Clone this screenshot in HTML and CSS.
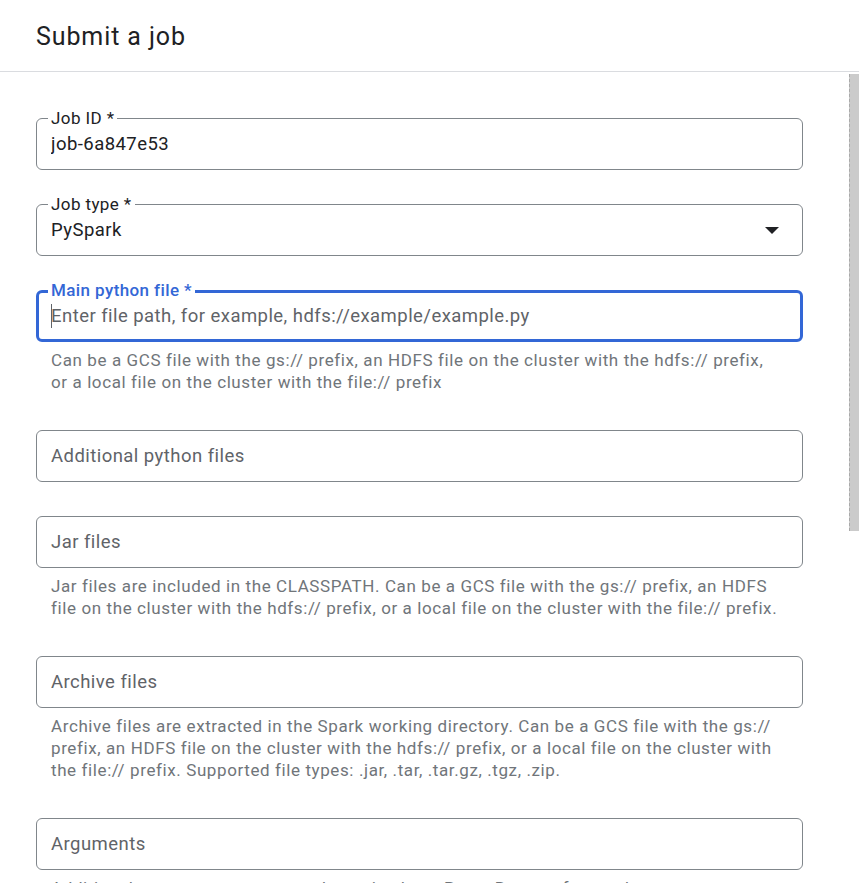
FILE: index.html
```html
<!DOCTYPE html>
<html lang="en">
<head>
<meta charset="utf-8">
<title>Submit a job</title>
<link rel="stylesheet" href="styles.css">
</head>
<body>
<header class="page-header">
  <h1 class="page-title">Submit a job</h1>
</header>
<div class="body-row">
  <main class="content">
    <form class="job-form">
      <div class="group">
        <div class="field">
          <label class="field-label" for="job-id">Job ID *</label>
          <input class="field-input" id="job-id" type="text" value="job-6a847e53">
        </div>
      </div>

      <div class="group">
        <div class="field">
          <span class="field-label">Job type *</span>
          <div class="field-input">PySpark</div>
          <span class="select-arrow"></span>
        </div>
      </div>

      <div class="group has-hint">
        <div class="field focused">
          <label class="field-label" for="main-file">Main python file *</label>
          <span class="caret"></span>
          <input class="field-input" id="main-file" type="text" placeholder="Enter file path, for example, hdfs://example/example.py">
        </div>
        <p class="hint">Can be a GCS file with the gs:// prefix, an HDFS file on the cluster with the hdfs:// prefix, or a local file on the cluster with the file:// prefix</p>
      </div>

      <div class="group">
        <div class="field">
          <input class="field-input" type="text" placeholder="Additional python files">
        </div>
      </div>

      <div class="group has-hint">
        <div class="field">
          <input class="field-input" type="text" placeholder="Jar files">
        </div>
        <p class="hint">Jar files are included in the CLASSPATH. Can be a GCS file with the gs:// prefix, an HDFS file on the cluster with the hdfs:// prefix, or a local file on the cluster with the file:// prefix.</p>
      </div>

      <div class="group has-hint">
        <div class="field">
          <input class="field-input" type="text" placeholder="Archive files">
        </div>
        <p class="hint">Archive files are extracted in the Spark working directory. Can be a GCS file with the gs:// prefix, an HDFS file on the cluster with the hdfs:// prefix, or a local file on the cluster with the file:// prefix. Supported file types: .jar, .tar, .tar.gz, .tgz, .zip.</p>
      </div>

      <div class="group has-hint">
        <div class="field">
          <input class="field-input" type="text" placeholder="Arguments">
        </div>
        <p class="hint">Additional arguments to pass to the main class. Press Return after each argument.</p>
      </div>

      <div class="group has-hint">
        <div class="field">
          <input class="field-input" type="text" placeholder="Max restarts per hour">
        </div>
        <p class="hint">Leave blank if you don't want to allow automatic restarts on job failure.</p>
      </div>

      <div class="group">
        <h2 class="section-title">Properties</h2>
        <button type="button" class="text-button">+ ADD PROPERTY</button>
      </div>

      <div class="group">
        <h2 class="section-title">Labels</h2>
        <button type="button" class="text-button">+ ADD LABEL</button>
      </div>
    </form>
  </main>
  <div class="scrollbar" aria-hidden="true">
    <div class="scroll-thumb"></div>
  </div>
</div>
</body>
</html>
```
FILE: styles.css
```css
* { box-sizing: border-box; }

html, body {
  margin: 0;
  height: 100%;
}

body {
  font-family: Roboto, "Liberation Sans", Arial, sans-serif;
  color: #202124;
  background: #fff;
  display: flex;
  flex-direction: column;
  overflow: hidden;
}

.page-header {
  flex: 0 0 auto;
  height: 72px;
  padding: 21px 36px 0;
  border-bottom: 1px solid #dadce0;
}

.page-title {
  margin: 0;
  font-size: 25px;
  letter-spacing: 0.9px;
  line-height: 32px;
  font-weight: 400;
  color: #202124;
}

.body-row {
  flex: 1 1 auto;
  min-height: 0;
  display: flex;
}

.content {
  flex: 1 1 auto;
  min-width: 0;
  overflow: hidden;
  padding: 46px 46px 0 36px;
}

.scrollbar {
  flex: 0 0 10px;
  padding-top: 2px;
  background: #fff;
}

.scroll-thumb {
  height: 457px;
  background: #cbcbcb;
  border-left: 1px dashed #a9a9a9;
}

.job-form {
  display: flex;
  flex-direction: column;
}

.group {
  margin-bottom: 34px;
}
.group.has-hint {
  margin-bottom: 37px;
}

.field {
  position: relative;
  height: 52px;
  border: 1px solid #80868b;
  border-radius: 6px;
  display: flex;
  align-items: center;
  padding: 0 14px;
}

.field.focused {
  border: 3px solid #3367d6;
  padding: 0 12px;
}

.field-label {
  position: absolute;
  top: -11px;
  left: 11px;
  padding: 0 3px;
  background: #fff;
  font-size: 17px;
  letter-spacing: 0.4px;
  line-height: 20px;
  color: #202124;
}

.field.focused .field-label {
  top: -13px;
  left: 9px;
  color: #3367d6;
  font-weight: 500;
}

.field-input {
  flex: 1 1 auto;
  min-width: 0;
  border: 0;
  outline: 0;
  padding: 0;
  margin: 0;
  background: transparent;
  font-family: inherit;
  font-size: 18.5px;
  letter-spacing: 0.45px;
  line-height: 24px;
  color: #202124;
}

.field-input::placeholder {
  color: #5f6368;
  opacity: 1;
}

.select-arrow {
  width: 0;
  height: 0;
  border-left: 7px solid transparent;
  border-right: 7px solid transparent;
  border-top: 7px solid #202124;
  margin-right: 9px;
}

.caret {
  position: absolute;
  left: 12px;
  top: 11px;
  width: 1px;
  height: 24px;
  background: #5f6368;
}

.hint {
  margin: 7px 0 0;
  padding: 0 23px 0 15px;
  font-size: 17px;
  letter-spacing: 0.6px;
  line-height: 22px;
  color: #70757a;
}

.section-title {
  margin: 0 0 12px;
  font-size: 18px;
  font-weight: 500;
}

.text-button {
  border: 0;
  background: none;
  padding: 8px 0;
  font-family: inherit;
  font-size: 15px;
  font-weight: 500;
  color: #3367d6;
}
```
